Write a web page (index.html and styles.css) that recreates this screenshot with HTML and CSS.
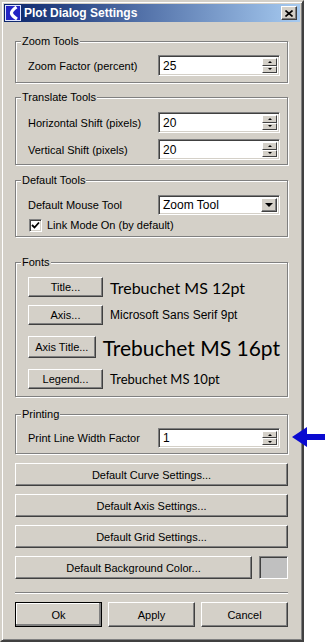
FILE: index.html
```html
<!DOCTYPE html>
<html lang="en">
<head>
    <meta charset="UTF-8">
    <meta name="viewport" content="width=device-width, initial-scale=1.0">
    <title>Plot Dialog Settings</title>
    <link rel="stylesheet" href="styles.css">
</head>
<body>

    <div class="stage">
        <div class="window">
            <!-- Title bar -->
            <div class="titlebar">
                <svg class="app-icon" width="16" height="16" viewBox="0 0 16 16">
                    <rect x="0.5" y="0.5" width="15" height="15" fill="#2424c4" stroke="#dfe4ff"/>
                    <path d="M11.5 2 C8 4.5 6 6.5 6.5 8.5 C7 10.5 9.5 12.5 12 14" stroke="#fff" stroke-width="3.2" fill="none"/>
                </svg>
                <span class="title">Plot Dialog Settings</span>
                <button class="close">
                    <svg width="8" height="7" viewBox="0 0 8 7">
                        <path d="M0.5 0.5 L7.5 6.5 M7.5 0.5 L0.5 6.5" stroke="#000" stroke-width="1.6"/>
                    </svg>
                </button>
            </div>

            <div class="content">
                <!-- Zoom -->
                <fieldset class="group group-zoom">
                    <legend>Zoom Tools</legend>
                    <div class="field">
                        <label>Zoom Factor (percent)</label>
                        <div class="spin">
                            <span class="spin-value">25</span>
                            <span class="spin-btns"><span class="spin-up"></span><span class="spin-down"></span></span>
                        </div>
                    </div>
                </fieldset>

                <!-- Translate -->
                <fieldset class="group group-translate">
                    <legend>Translate Tools</legend>
                    <div class="field">
                        <label>Horizontal Shift (pixels)</label>
                        <div class="spin">
                            <span class="spin-value">20</span>
                            <span class="spin-btns"><span class="spin-up"></span><span class="spin-down"></span></span>
                        </div>
                    </div>
                    <div class="field">
                        <label>Vertical Shift (pixels)</label>
                        <div class="spin">
                            <span class="spin-value">20</span>
                            <span class="spin-btns"><span class="spin-up"></span><span class="spin-down"></span></span>
                        </div>
                    </div>
                </fieldset>

                <!-- Default tools -->
                <fieldset class="group group-default">
                    <legend>Default Tools</legend>
                    <div class="field field-select">
                        <label>Default Mouse Tool</label>
                        <div class="combo">
                            <span class="combo-value">Zoom Tool</span>
                            <span class="combo-btn"><span class="arrow-down"></span></span>
                        </div>
                    </div>
                    <div class="check-row">
                        <span class="checkbox">
                            <svg width="9" height="9" viewBox="0 0 9 9">
                                <path d="M1 4 L3.5 6.5 L8 1.5" stroke="#000" stroke-width="1.8" fill="none"/>
                            </svg>
                        </span>
                        <span>Link Mode On (by default)</span>
                    </div>
                </fieldset>

                <!-- Fonts -->
                <fieldset class="group group-fonts">
                    <legend>Fonts</legend>
                    <div class="font-row row-title">
                        <button class="btn font-btn">Title...</button>
                        <span class="sample sample-12">Trebuchet MS 12pt</span>
                    </div>
                    <div class="font-row row-axis">
                        <button class="btn font-btn">Axis...</button>
                        <span class="sample sample-ms">Microsoft Sans Serif 9pt</span>
                    </div>
                    <div class="font-row row-axistitle">
                        <button class="btn font-btn">Axis Title...</button>
                        <span class="sample sample-16">Trebuchet MS 16pt</span>
                    </div>
                    <div class="font-row row-legend">
                        <button class="btn font-btn">Legend...</button>
                        <span class="sample sample-10">Trebuchet MS 10pt</span>
                    </div>
                </fieldset>

                <!-- Printing -->
                <fieldset class="group group-print">
                    <legend>Printing</legend>
                    <div class="field field-print">
                        <label>Print Line Width Factor</label>
                        <div class="spin">
                            <span class="spin-value">1</span>
                            <span class="spin-btns"><span class="spin-up"></span><span class="spin-down"></span></span>
                        </div>
                    </div>
                </fieldset>

                <!-- Default setting buttons -->
                <div class="wide-buttons">
                    <button class="btn wide">Default Curve Settings...</button>
                    <button class="btn wide">Default Axis Settings...</button>
                    <button class="btn wide">Default Grid Settings...</button>
                    <div class="bg-row">
                        <button class="btn wide">Default Background Color...</button>
                        <span class="swatch"></span>
                    </div>
                </div>

                <div class="separator"></div>

                <div class="actions">
                    <button class="btn action default">Ok</button>
                    <button class="btn action">Apply</button>
                    <button class="btn action">Cancel</button>
                </div>
            </div>
        </div>

        <!-- Annotation arrow -->
        <svg class="pointer" width="33" height="24" viewBox="0 0 33 24">
            <path d="M0 12 L15 2 L15 9 L33 9 L33 15 L15 15 L15 22 Z" fill="#0a0ad0"/>
        </svg>
    </div>

</body>
</html>
```

FILE: styles.css
```css
body {
    margin: 0;
    background-color: #fff;
    font-family: "Liberation Sans", Arial, sans-serif;
    font-size: 11px;
    color: #000;
}
.stage {
    position: relative;
    width: 325px;
    height: 642px;
}
.window {
    width: 304px;
    box-sizing: border-box;
    background-color: #d4d0c8;
    border: 2px solid;
    border-color: #d4d0c8 #404040 #404040 #d4d0c8;
    box-shadow: inset 1px 1px #fff, inset -1px -1px #808080;
    padding: 2px;
}

/* Title bar */
.titlebar {
    height: 18px;
    display: flex;
    align-items: center;
    background: linear-gradient(to right, #0a246a, #a6caf0);
    padding: 0 3px 0 1px;
}
.app-icon {
    flex: none;
    margin-right: 3px;
}
.title {
    flex: 1;
    color: #fff;
    font-weight: bold;
    font-size: 12px;
}
.close {
    width: 16px;
    height: 14px;
    padding: 0;
    display: flex;
    align-items: center;
    justify-content: center;
    background-color: #d4d0c8;
    border: 1px solid;
    border-color: #fff #404040 #404040 #fff;
    box-shadow: inset -1px -1px #808080;
}

.content {
    padding: 0 12px 11px 11px;
}

/* Group boxes */
.group {
    margin: 0;
    min-width: 0;
    border: 1px solid #808080;
    box-shadow: 1px 1px #fff, inset 1px 1px #fff;
    padding: 7px 7px 6px 12px;
}
.group legend {
    margin-left: -7px;
    padding: 0 1px;
    line-height: 14px;
    background-color: #d4d0c8;
}
.group-zoom {
    margin-top: 12px;
}
.group-translate {
    margin-top: 7px;
    padding-top: 8px;
    padding-bottom: 4px;
}
.group-default {
    margin-top: 8px;
    padding-top: 8px;
    padding-bottom: 4px;
}
.group-fonts {
    margin-top: 18px;
    padding-top: 8px;
    padding-bottom: 7px;
}
.group-print {
    margin-top: 10px;
    padding-bottom: 5px;
}

.field {
    display: flex;
    align-items: center;
    justify-content: space-between;
    height: 21px;
}
.field + .field {
    margin-top: 6px;
}
.field-select,
.field-print {
    height: 20px;
}

/* Spin box */
.spin,
.combo {
    width: 122px;
    height: 100%;
    box-sizing: border-box;
    display: flex;
    align-items: center;
    background-color: #fff;
    border: 1px solid;
    border-color: #808080 #fff #fff #808080;
    box-shadow: inset 1px 1px #404040, inset -1px -1px #d4d0c8;
    padding: 2px;
}
.spin-value,
.combo-value {
    flex: 1;
    padding-left: 2px;
    font-size: 12px;
}
.spin-btns {
    width: 15px;
    height: 100%;
    display: flex;
    flex-direction: column;
}
.spin-up,
.spin-down {
    flex: 1;
    position: relative;
    background-color: #d4d0c8;
    border: 1px solid;
    border-color: #fff #404040 #404040 #fff;
}
.spin-up::after,
.spin-down::after {
    content: "";
    position: absolute;
    left: 50%;
    top: 50%;
    margin-left: -2px;
    border-left: 2px solid transparent;
    border-right: 2px solid transparent;
}
.spin-up::after {
    margin-top: -1px;
    border-bottom: 2px solid #000;
}
.spin-down::after {
    margin-top: -1px;
    border-top: 2px solid #000;
}

/* Combo box */
.combo-btn {
    width: 16px;
    height: 100%;
    box-sizing: border-box;
    display: flex;
    align-items: center;
    justify-content: center;
    background-color: #d4d0c8;
    border: 1px solid;
    border-color: #fff #404040 #404040 #fff;
    box-shadow: inset -1px -1px #808080;
}
.arrow-down {
    border-left: 4px solid transparent;
    border-right: 4px solid transparent;
    border-top: 4px solid #000;
}

.check-row {
    display: flex;
    align-items: center;
    height: 14px;
    margin-top: 3px;
    margin-left: 1px;
}
.checkbox {
    width: 13px;
    height: 13px;
    box-sizing: border-box;
    display: flex;
    align-items: center;
    justify-content: center;
    margin-right: 5px;
    background-color: #fff;
    border: 1px solid;
    border-color: #808080 #fff #fff #808080;
    box-shadow: inset 1px 1px #404040, inset -1px -1px #d4d0c8;
}

/* Buttons */
.btn {
    font-family: "Liberation Sans", Arial, sans-serif;
    font-size: 11px;
    color: #000;
    background-color: #d4d0c8;
    border: 1px solid;
    border-color: #fff #404040 #404040 #fff;
    box-shadow: inset -1px -1px #808080;
    padding: 0;
}

/* Fonts group */
.font-row {
    display: flex;
    align-items: center;
    height: 20px;
}
.row-axis {
    margin-top: 8px;
}
.row-axistitle {
    margin-top: 11px;
    height: 22px;
}
.row-legend {
    margin-top: 11px;
}
.font-btn {
    width: 75px;
    height: 100%;
    margin-right: 7px;
}
.sample {
    font-family: "Lato", "Open Sans", sans-serif;
    white-space: nowrap;
}
.sample-12 {
    font-size: 16px;
}
.sample-ms {
    font-family: "Liberation Sans", Arial, sans-serif;
    font-size: 12px;
}
.sample-16 {
    font-size: 21px;
}
.sample-10 {
    font-size: 13px;
}

/* Wide buttons */
.wide-buttons {
    margin-top: 9px;
    display: flex;
    flex-direction: column;
    gap: 8px;
}
.wide {
    height: 23px;
    width: 100%;
}
.bg-row {
    display: flex;
    gap: 7px;
}
.swatch {
    flex: none;
    width: 29px;
    height: 23px;
    box-sizing: border-box;
    background-color: #c0c0c0;
    border: 1px solid;
    border-color: #808080 #fff #fff #808080;
    box-shadow: inset 1px 1px #404040;
}

.separator {
    margin-top: 13px;
    border-top: 1px solid #808080;
    border-bottom: 1px solid #fff;
}

.actions {
    margin-top: 8px;
    display: flex;
    gap: 6px;
}
.action {
    flex: 1;
    height: 25px;
}
.action.default {
    outline: 1px solid #000;
    outline-offset: -1px;
    box-shadow: inset -2px -2px #808080, inset 1px 1px #fff;
}

/* Annotation arrow, drawn over the dialog edge */
.pointer {
    position: absolute;
    left: 292px;
    top: 425px;
}
```
